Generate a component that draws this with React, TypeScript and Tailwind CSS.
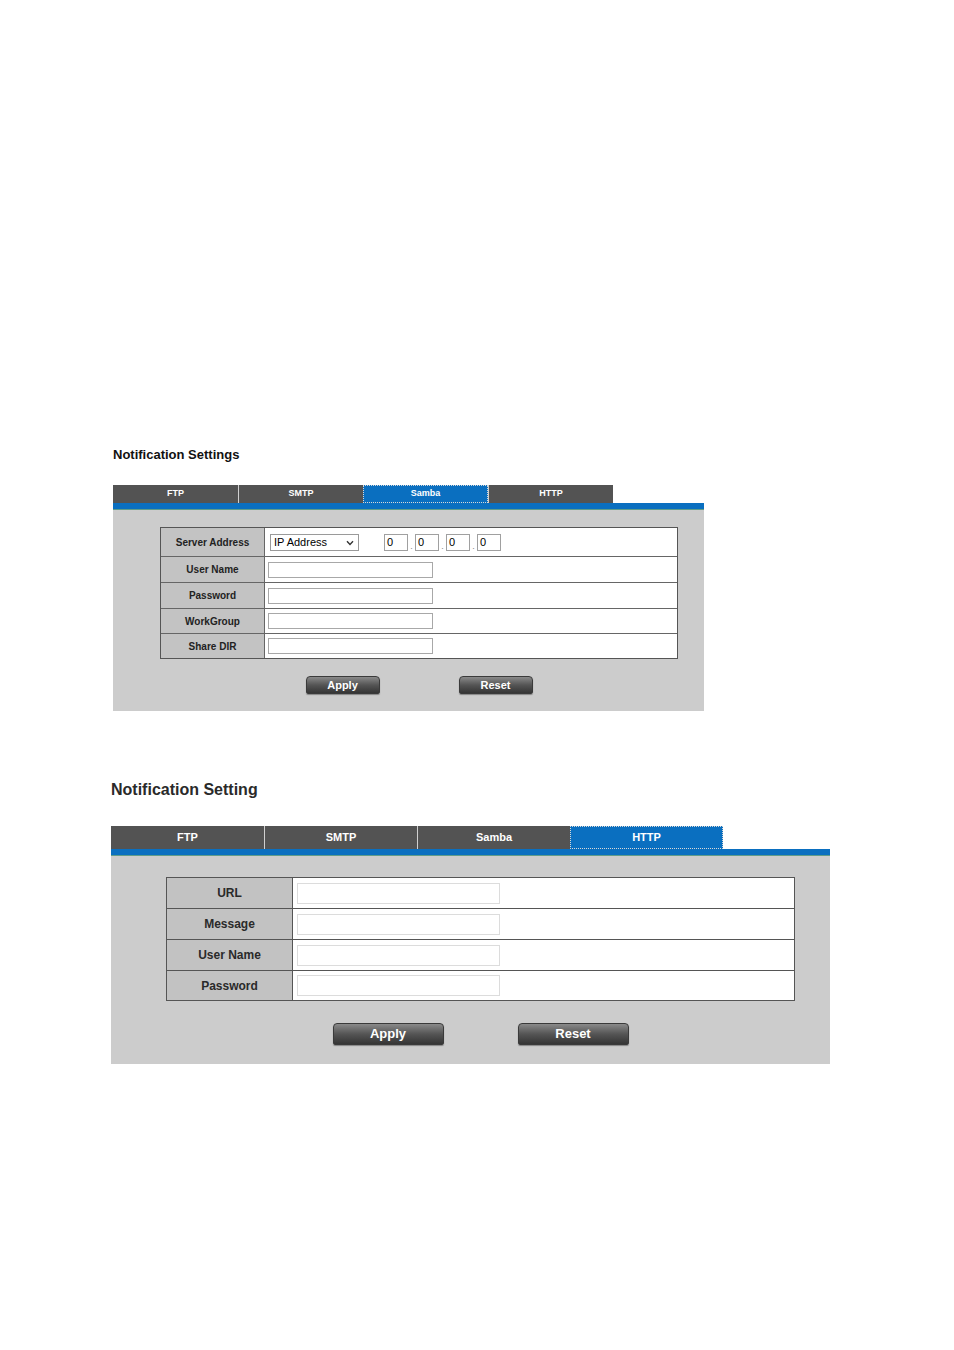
import React from "react";

const font = "font-['Liberation_Sans',Arial,sans-serif]";

type TabBarProps = {
  tabs: string[];
  active: string;
  size: "sm" | "lg";
};

function TabBar({ tabs, active, size }: TabBarProps) {
  const sm = size === "sm";
  return (
    <div className="flex">
      {tabs.map((t, i) => (
        <div
          key={t}
          className={[
            "flex items-center justify-center font-bold text-white",
            sm ? "h-[18px] w-[125px] text-[9px]" : "h-[23px] w-[153px] text-[11px]",
            t === active
              ? "border border-dotted border-[#d8d8d8] bg-[#0a6fc0]"
              : "bg-[#535353]",
            i > 0 && t !== active ? "border-l border-l-[#d0d0d0]" : "",
          ].join(" ")}
        >
          {t}
        </div>
      ))}
    </div>
  );
}

function Strip() {
  return <div className="h-[7px] border-b border-b-[#5f9c8a] bg-[#0a6fc0]" />;
}

function Button({ label, size }: { label: string; size: "sm" | "lg" }) {
  const sm = size === "sm";
  return (
    <div
      className={[
        "flex items-center justify-center rounded-t-[4px] rounded-b-[2px] border border-[#3a3a3a] bg-linear-to-b from-[#8a8a8a] via-[#555555] to-[#353535] font-bold text-white shadow-[0_1px_1px_rgba(0,0,0,0.35)]",
        sm ? "h-[18px] w-[74px] text-[11px]" : "h-[22px] w-[111px] text-[13px]",
      ].join(" ")}
    >
      {label}
    </div>
  );
}

function SmallInput({ w = "w-[165px]" }: { w?: string }) {
  return <div className={`h-[16px] ${w} border border-[#a8a8a8] bg-white`} />;
}

function IpField() {
  return (
    <div className="flex h-[17px] w-[24px] items-center border border-[#a0a0a0] bg-white pl-[2px] text-[11px] leading-none text-black">
      0
    </div>
  );
}

function SambaPanel() {
  const rows: { label: string; h: string }[] = [
    { label: "User Name", h: "h-[26px]" },
    { label: "Password", h: "h-[26px]" },
    { label: "WorkGroup", h: "h-[25px]" },
    { label: "Share DIR", h: "h-[25px]" },
  ];
  return (
    <section className="ml-[113px] w-[591px]">
      <h2 className="mb-[22px] h-[16px] text-[13px] font-bold leading-[16px] text-[#111]">
        Notification Settings
      </h2>
      <div className="w-[500px]">
        <TabBar tabs={["FTP", "SMTP", "Samba", "HTTP"]} active="Samba" size="sm" />
      </div>
      <Strip />
      <div className="bg-[#cccccc] pt-[17px] pb-[17px]">
        <div className="ml-[47px] w-[518px] border border-[#555] bg-white">
          <div className="flex h-[28px]">
            <div className="flex w-[104px] shrink-0 items-center justify-center border-r border-r-[#666] bg-[#c3c3c3] text-[10px] font-bold text-[#222]">
              Server Address
            </div>
            <div className="flex items-center pl-[5px]">
              <div className="flex h-[17px] w-[89px] items-center justify-between border border-[#9a9a9a] bg-white pl-[3px] pr-[4px] text-[11px] text-black">
                <span>IP Address</span>
                <svg width="8" height="6" viewBox="0 0 8 6" className="mt-[1px]">
                  <path d="M1 1.2 L4 4.4 L7 1.2" fill="none" stroke="#333" strokeWidth="1.4" />
                </svg>
              </div>
              <div className="ml-[25px] flex items-end gap-[1px]">
                <IpField />
                <span className="w-[5px] text-center text-[9px] leading-[9px] text-[#888]">.</span>
                <IpField />
                <span className="w-[5px] text-center text-[9px] leading-[9px] text-[#888]">.</span>
                <IpField />
                <span className="w-[5px] text-center text-[9px] leading-[9px] text-[#888]">.</span>
                <IpField />
              </div>
            </div>
          </div>
          {rows.map((r) => (
            <div key={r.label} className={`flex ${r.h} border-t border-t-[#666]`}>
              <div className="flex w-[104px] shrink-0 items-center justify-center border-r border-r-[#666] bg-[#c3c3c3] text-[10px] font-bold text-[#222]">
                {r.label}
              </div>
              <div className="flex items-center pl-[3px]">
                <SmallInput />
              </div>
            </div>
          ))}
        </div>
        <div className="mt-[17px] ml-[47px] flex w-[518px] justify-center gap-[79px]">
          <Button label="Apply" size="sm" />
          <Button label="Reset" size="sm" />
        </div>
      </div>
    </section>
  );
}

function HttpPanel() {
  const rows: { label: string; h: string }[] = [
    { label: "URL", h: "h-[30px]" },
    { label: "Message", h: "h-[31px]" },
    { label: "User Name", h: "h-[31px]" },
    { label: "Password", h: "h-[30px]" },
  ];
  return (
    <section className="mt-[69px] ml-[111px] w-[719px]">
      <h2 className="mb-[26px] h-[20px] text-[16px] font-bold leading-[20px] text-[#2a2a2a]">
        Notification Setting
      </h2>
      <div className="w-[612px]">
        <TabBar tabs={["FTP", "SMTP", "Samba", "HTTP"]} active="HTTP" size="lg" />
      </div>
      <Strip />
      <div className="bg-[#cccccc] pt-[21px] pb-[19px]">
        <div className="ml-[55px] w-[629px] border border-[#555] bg-white">
          {rows.map((r, i) => (
            <div
              key={r.label}
              className={`flex ${r.h} ${i > 0 ? "border-t border-t-[#555]" : ""}`}
            >
              <div className="flex w-[126px] shrink-0 items-center justify-center border-r border-r-[#555] bg-[#c2c2c2] text-[12px] font-bold text-[#2a2a2a]">
                {r.label}
              </div>
              <div className="flex items-center pl-[4px]">
                <div className="h-[21px] w-[203px] border border-[#dcdcdc] bg-white" />
              </div>
            </div>
          ))}
        </div>
        <div className="mt-[22px] ml-[55px] flex w-[629px] justify-center gap-[74px]">
          <Button label="Apply" size="lg" />
          <Button label="Reset" size="lg" />
        </div>
      </div>
    </section>
  );
}

export default function App() {
  return (
    <div className={`${font} min-h-[1350px] w-[954px] bg-white pt-[447px]`}>
      <SambaPanel />
      <HttpPanel />
    </div>
  );
}
